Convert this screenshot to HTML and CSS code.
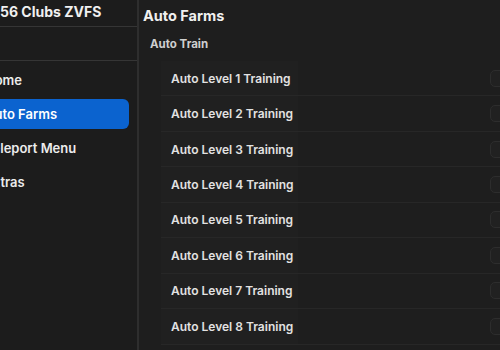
FILE: index.html
```html
<!DOCTYPE html>
<html lang="en">
<head>
  <meta charset="UTF-8" />
  <title>Clubs ZVFS</title>
  <link rel="stylesheet" href="styles.css">
</head>
<body>
  <div class="app">
    <!-- Sidebar -->
    <aside class="sidebar">
      <div class="brand">56 Clubs ZVFS</div>
      <div class="spacer"></div>
      <nav class="nav">
        <div class="nav-item">Home</div>
        <div class="nav-item active">Auto Farms</div>
        <div class="nav-item">Teleport Menu</div>
        <div class="nav-item">Extras</div>
      </nav>
    </aside>

    <!-- Page -->
    <main class="page">
      <h1>Auto Farms</h1>
      <h2>Auto Train</h2>
      <div class="rows">
        <div class="row"><span class="label">Auto Level 1 Training</span><span class="toggle"></span></div>
        <div class="row"><span class="label">Auto Level 2 Training</span><span class="toggle"></span></div>
        <div class="row"><span class="label">Auto Level 3 Training</span><span class="toggle"></span></div>
        <div class="row"><span class="label">Auto Level 4 Training</span><span class="toggle"></span></div>
        <div class="row"><span class="label">Auto Level 5 Training</span><span class="toggle"></span></div>
        <div class="row"><span class="label">Auto Level 6 Training</span><span class="toggle"></span></div>
        <div class="row"><span class="label">Auto Level 7 Training</span><span class="toggle"></span></div>
        <div class="row"><span class="label">Auto Level 8 Training</span><span class="toggle"></span></div>
      </div>
    </main>
  </div>
</body>
</html>
```

FILE: styles.css
```css
body {
  margin: 0;
  background: #1e1e1e;
  color: #e6e6e6;
  font-family: Inter, "Noto Sans", sans-serif;
  overflow: hidden;
  height: 350px;
}

.app {
  display: flex;
  height: 350px;
  margin-left: -20px;
}

.sidebar {
  width: 157px;
  flex-shrink: 0;
  background: #1c1c1c;
  border-right: 2px solid #2e2e2e;
}

.brand {
  height: 26px;
  line-height: 24px;
  padding-left: 20px;
  font-size: 14px;
  font-weight: 700;
  color: #f0f0f0;
  border-bottom: 1px solid #353535;
}

.spacer {
  height: 33px;
  border-bottom: 1px solid #353535;
}

.nav {
  display: flex;
  flex-direction: column;
  gap: 4px;
  padding: 4px 8px 0 0;
}

.nav-item {
  height: 30px;
  line-height: 30px;
  padding-left: 5px;
  font-size: 13px;
  font-weight: 600;
  color: #ececec;
  border-radius: 0 6px 6px 0;
}

.nav-item.active {
  background: #0b63cf;
  color: #fff;
}

.page {
  flex: 1;
  padding-left: 4px;
}

.page h1 {
  margin: 0;
  height: 31px;
  line-height: 32px;
  font-size: 14.5px;
  font-weight: 700;
  color: #f0f0f0;
}

.page h2 {
  margin: 0 0 0 7px;
  height: 30px;
  line-height: 26px;
  font-size: 11.5px;
  font-weight: 700;
  color: #cfcfcf;
}

.rows {
  margin: 0 -30px 0 18px;
}

.row {
  display: flex;
  justify-content: space-between;
  align-items: center;
  box-sizing: border-box;
  height: 35.45px;
  border-bottom: 1px solid #272727;
}

.label {
  align-self: stretch;
  display: flex;
  align-items: center;
  width: 127px;
  padding-left: 10px;
  background: #202020;
  font-size: 12px;
  font-weight: 600;
  color: #e2e2e2;
}

.toggle {
  width: 32px;
  height: 15px;
  margin-right: 6px;
  border: 1px solid #2d2d2d;
  border-radius: 5px;
  background: #212121;
}
```
